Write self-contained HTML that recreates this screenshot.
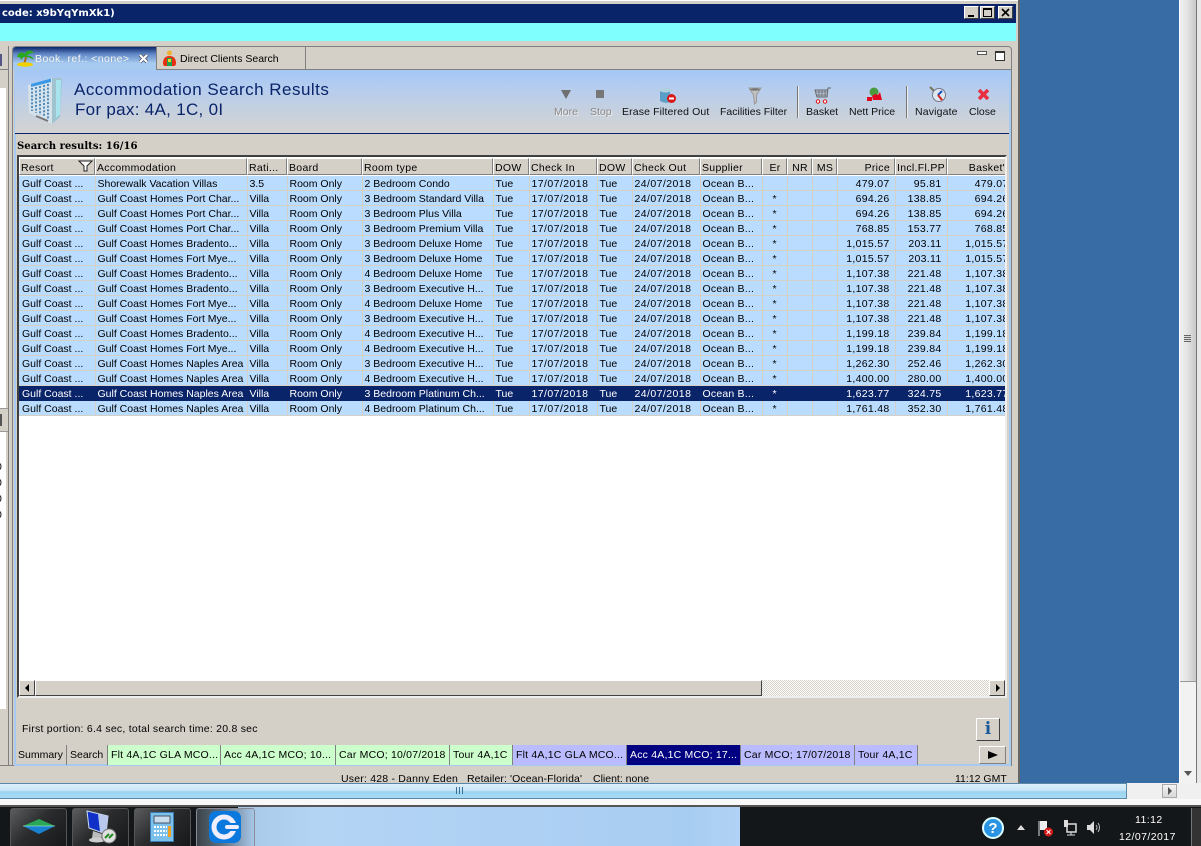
<!DOCTYPE html>
<html><head><meta charset="utf-8"><style>
html,body{margin:0;padding:0}
body{width:1201px;height:846px;position:relative;overflow:hidden;background:#d4d0c8;font:10.5px/15px "Liberation Sans",sans-serif;color:#000;letter-spacing:0}
.a{position:absolute;white-space:nowrap}
table{border-collapse:collapse;table-layout:fixed;position:absolute;left:0;top:0;width:995px}
td{height:12px;padding:2px 2px 0;border-right:1px solid #d4d0c8;border-bottom:1px solid #d4d0c8;background:#b9dcff;overflow:hidden;white-space:nowrap;line-height:12px;box-sizing:content-box}
td:first-child{padding-left:3px}
td:nth-child(7),td:nth-child(9){letter-spacing:.43px}
td:nth-child(10){letter-spacing:.2px}
tr.s td{background:#0a246a;color:#fff;border-color:#0a246a}
td.r{text-align:right;padding-right:5px;letter-spacing:.3px}td.c{text-align:center}
.h{position:absolute;top:158px;height:17px;line-height:19px;box-sizing:border-box;background:#d4d0c8;border-top:1px solid #fff;border-left:1px solid #fff;border-right:1px solid #808080;border-bottom:1px solid #808080;padding-left:1px;overflow:hidden;white-space:nowrap;letter-spacing:.3px}
.t{position:absolute;top:745px;height:20px;line-height:20px;box-sizing:border-box;padding-left:3px;border-right:1px solid #808080;white-space:nowrap;overflow:hidden;letter-spacing:.2px}
.g{background:#ccffcc}.b{background:#bbbbff}
.tb{position:absolute;top:105px;text-align:center;white-space:nowrap;line-height:14px;color:#111}
.bt{position:absolute;top:808px;height:38px;width:57px;box-sizing:border-box;border:1px solid #555;border-bottom:0;border-radius:3px 3px 0 0;background:linear-gradient(135deg,#5a5c5e,#2a2c2e 45%,#16181a)}
</style></head><body>
<div class="a" style="left:0;top:0;width:1018px;height:4px;background:#d4d0c8;border-top:1px solid #fff;box-sizing:border-box"></div>
<div class="a" style="left:0;top:4px;width:1016px;height:19px;background:#0a246a"></div>
<div class="a" style="left:2px;top:4px;color:#fff;font:bold 10px/19px 'DejaVu Sans',sans-serif">code: x9bYqYmXk1)</div>
<div class="a" style="left:964px;top:6px;width:15px;height:13px;background:#d4d0c8;border:1px solid;border-color:#fff #404040 #404040 #fff;box-sizing:border-box"><div class="a" style="left:3px;top:8px;width:6px;height:2px;background:#000"></div></div>
<div class="a" style="left:980px;top:6px;width:15px;height:13px;background:#d4d0c8;border:1px solid;border-color:#fff #404040 #404040 #fff;box-sizing:border-box"><div class="a" style="left:2px;top:1px;width:9px;height:9px;border:1px solid #000;border-top-width:2px;box-sizing:border-box"></div></div>
<div class="a" style="left:998px;top:6px;width:15px;height:13px;background:#d4d0c8;border:1px solid;border-color:#fff #404040 #404040 #fff;box-sizing:border-box"><svg class="a" style="left:2px;top:1px" width="10" height="9"><path d="M1 1L8 8M8 1L1 8" stroke="#000" stroke-width="1.6"/></svg></div>
<div class="a" style="left:0;top:23px;width:1016px;height:18px;background:#80ffff"></div>
<div class="a" style="left:1018px;top:0;width:2px;height:783px;background:#666"></div>
<div class="a" style="left:1020px;top:0;width:159px;height:783px;background:#386ca5"></div>
<div class="a" style="left:1179px;top:0;width:22px;height:783px;background:#fff"></div>
<div class="a" style="left:1180px;top:0;width:16px;height:682px;background:linear-gradient(90deg,#f0f0f0,#e6e6e6 40%,#c8c8c8);border-bottom:1px solid #999;box-sizing:border-box"></div>
<div class="a" style="left:1196px;top:0;width:5px;height:783px;background:#e8e8e8;border-left:1px solid #777;box-sizing:border-box"></div>
<div class="a" style="left:1180px;top:682px;width:16px;height:101px;background:#f2f2f2"></div>
<div class="a" style="left:1184px;top:335px;width:7px;height:7px;background:repeating-linear-gradient(#666 0 1px,#ddd 1px 2px)"></div>
<svg class="a" style="left:1183px;top:771px" width="10" height="6"><path d="M1 0H9L5 5Z" fill="#555"/></svg>

<!-- left panel -->
<div class="a" style="left:0;top:46px;width:9px;height:720px;background:#d4d0c8;border-right:1px solid #808080;box-sizing:border-box"></div>
<div class="a" style="left:0;top:54px;width:2px;height:12px;background:#fff;border:1px solid #558;box-sizing:border-box"></div>
<div class="a" style="left:0;top:69px;width:8px;height:1px;background:#808080"></div>
<div class="a" style="left:0;top:88px;width:6px;height:621px;background:#fff"></div>
<div class="a" style="left:0;top:408px;width:8px;height:24px;background:#d4d0c8;border-top:1px solid #999;border-bottom:1px solid #999;box-sizing:border-box"></div>
<div class="a" style="left:0;top:414px;width:2px;height:12px;border:1px solid #555;box-sizing:border-box"></div>
<div class="a" style="left:-4px;top:459px;line-height:16px">0<br>0<br>0<br>0</div>
<div class="a" style="left:0;top:765px;width:12px;height:1px;background:#808080"></div>

<!-- main panel -->
<div class="a" style="left:12px;top:46px;width:1000px;height:720px;background:#d4d0c8;border:1px solid #808080;border-radius:4px 4px 0 0;box-sizing:border-box"></div>
<div class="a" style="left:13px;top:47px;width:143px;height:23px;background:linear-gradient(#0a246a,#5f86c4 30%,#a6caf0 70%);border-radius:3px 0 0 0"></div>
<div class="a" style="left:156px;top:47px;width:1px;height:23px;background:#808080"></div>
<div class="a" style="left:305px;top:47px;width:1px;height:23px;background:#808080"></div>
<div class="a" style="left:157px;top:69px;width:854px;height:1px;background:#808080"></div>
<svg class="a" style="left:16px;top:49px" width="19" height="18"><path d="M10 7C10 10 9 12 8 15" stroke="#a86a10" stroke-width="2" fill="none"/><path d="M1 8C2 3 7 2 9 5C10 1 15 0 18 4C15 4 12 5 11 7C14 6 17 8 18 11C15 9 12 8 10 8C7 7 7 9 5 11C5 9 4 8 1 8Z" fill="#2aa820"/><ellipse cx="9" cy="15.500" rx="8" ry="2.200" fill="#f0d000"/></svg>
<div class="a" style="left:35px;top:52px;color:#f4f4ee;letter-spacing:.45px">Book. ref.: &lt;none&gt;</div>
<svg class="a" style="left:138px;top:53px" width="11" height="11"><path d="M2 2L9 9M9 2L2 9" stroke="#445" stroke-width="3.500"/><path d="M2 2L9 9M9 2L2 9" stroke="#fff" stroke-width="2.200"/></svg>
<svg class="a" style="left:162px;top:50px" width="15" height="18"><circle cx="7.500" cy="3" r="2.500" fill="#f0b030"/><path d="M1 13C1 8 4 6 7.500 6C11 6 14 8 14 13C14 15 13 16 12 16H3C2 16 1 15 1 13Z" fill="#e83010"/><rect x="5" y="8" width="5" height="8" fill="#20a050"/><rect x="6" y="9" width="3" height="3" fill="#f0d020"/></svg>
<div class="a" style="left:180px;top:52px">Direct Clients Search</div>
<div class="a" style="left:977px;top:51px;width:10px;height:4px;background:#fff;border:1px solid #555;box-sizing:border-box"></div>
<div class="a" style="left:995px;top:51px;width:10px;height:10px;background:#fff;border:1px solid #333;border-top-width:2px;box-sizing:border-box"></div>

<div class="a" style="left:14px;top:70px;width:2px;height:696px;background:#a6caf0"></div>
<div class="a" style="left:1009px;top:70px;width:2px;height:696px;background:#a6caf0"></div>
<div class="a" style="left:14px;top:764px;width:997px;height:2px;background:#a6caf0"></div>

<!-- header band -->
<div class="a" style="left:15px;top:70px;width:994px;height:63px;background:linear-gradient(#a3c7f6,#b6cdee 30%,#d2d3d2 95%)"></div>
<div class="a" style="left:15px;top:133px;width:994px;height:1px;background:#0a246a"></div>
<svg class="a" style="left:26px;top:76px" width="38" height="50"><path d="M2 9L26 2V48L3 37Z" fill="#d6e2ea"/><path d="M26 2H36L34 41L26 48Z" fill="#9fc4cf"/><path d="M30 4H35L34 38L30 42Z" fill="#a8e4ee"/><path d="M5 8L25 2.500V6L5 11Z" fill="#3a98e8"/><path d="M6 12V35M10 11V37M14 10V39M18 9V41M22 8V43" stroke="#4f8cc0" stroke-width="2" stroke-dasharray="2 1.600"/><path d="M10 40L22 45" stroke="#777" stroke-width="2"/></svg>
<div class="a" style="left:74px;top:80px;font-size:17px;line-height:20px;color:#0a246a;letter-spacing:.48px">Accommodation Search Results</div>
<div class="a" style="left:75px;top:100px;font-size:17px;line-height:20px;color:#0a246a;letter-spacing:.3px">For pax: 4A, 1C, 0I</div>

<svg class="a" style="left:560px;top:89px" width="12" height="11"><path d="M1 1H11L6 10Z" fill="#6f6f6f"/></svg>
<div class="a" style="left:596px;top:90px;width:8px;height:8px;background:#777"></div>
<svg class="a" style="left:659px;top:87px" width="18" height="17"><path d="M1 3V14Q6 17 11 15V3Z" fill="#5a9fc8"/><ellipse cx="6.500" cy="3" rx="6" ry="2.500" fill="#b0d0e0"/><circle cx="12.500" cy="11.500" r="4.500" fill="#d81818"/><rect x="10" y="10.500" width="5" height="2" fill="#fff"/></svg>
<svg class="a" style="left:748px;top:87px" width="14" height="18"><path d="M1 1H13L8.500 8V15L6.500 17L5.500 8Z" fill="#c0c0c0" stroke="#9a9a9a"/><ellipse cx="7" cy="2.500" rx="5" ry="1.200" fill="#777"/></svg>
<svg class="a" style="left:814px;top:87px" width="18" height="17"><path d="M17 1H14L13 10H3L1 3H14" fill="none" stroke="#666"/><path d="M2 5H13M3 8H13M5 3V10M8 3V10M11 3V10" stroke="#777"/><circle cx="4" cy="14.500" r="1.700" fill="#fff" stroke="#e01010"/><circle cx="11" cy="14.500" r="1.700" fill="#fff" stroke="#e01010"/></svg>
<svg class="a" style="left:866px;top:87px" width="17" height="16"><circle cx="8" cy="5" r="4.500" fill="#4a9a40"/><path d="M1 10H6V14H1ZM6 9L9 7L12 8L14 5L15 9L16 13H7Z" fill="#e00820"/></svg>
<svg class="a" style="left:929px;top:86px" width="18" height="18"><path d="M1 1L6 6" stroke="#775" stroke-width="2"/><circle cx="10" cy="9" r="6.500" fill="#dde8f0" stroke="#778"/><path d="M13 5L9 9" stroke="#1a50c0" stroke-width="2"/><path d="M9 9L13 14" stroke="#d02020" stroke-width="2"/></svg>
<svg class="a" style="left:977px;top:88px" width="13" height="13"><path d="M2 2L11 11M11 2L2 11" stroke="#e83040" stroke-width="3.500"/></svg>

<div class="tb" style="left:554px;color:#8a8a8a;text-shadow:1px 1px 0 #eee">More</div>
<div class="tb" style="left:590px;color:#8a8a8a;text-shadow:1px 1px 0 #eee">Stop</div>
<div class="tb" style="left:622px;letter-spacing:.12px">Erase Filtered Out</div>
<div class="tb" style="left:720px">Facilities Filter</div>
<div class="a" style="left:797px;top:86px;width:1px;height:32px;background:#777;border-right:1px solid #eee"></div>
<div class="tb" style="left:806px">Basket</div>
<div class="tb" style="left:849px">Nett Price</div>
<div class="a" style="left:906px;top:86px;width:1px;height:32px;background:#777;border-right:1px solid #eee"></div>
<div class="tb" style="left:915px;letter-spacing:.15px">Navigate</div>
<div class="tb" style="left:969px">Close</div>

<div class="a" style="left:17px;top:139px;font:bold 10.1px/15px 'DejaVu Serif','Liberation Serif',serif">Search results: 16/16</div>

<!-- grid frame -->
<div class="a" style="left:17px;top:155px;width:990px;height:543px;background:#fff;border:2px solid;border-color:#404040 #eee #eee #404040;box-sizing:border-box"></div>
<div class="h" style="left:19px;width:76px">Resort</div>
<div class="h" style="left:95px;width:152px">Accommodation</div>
<div class="h" style="left:247px;width:40px">Rati...</div>
<div class="h" style="left:287px;width:75px">Board</div>
<div class="h" style="left:362px;width:131px">Room type</div>
<div class="h" style="left:493px;width:36px">DOW</div>
<div class="h" style="left:529px;width:68px">Check In</div>
<div class="h" style="left:597px;width:35px">DOW</div>
<div class="h" style="left:632px;width:68px">Check Out</div>
<div class="h" style="left:700px;width:62px">Supplier</div>
<div class="h" style="left:762px;width:25px;text-align:center">Er</div>
<div class="h" style="left:787px;width:25px;text-align:center">NR</div>
<div class="h" style="left:812px;width:25px;text-align:center">MS</div>
<div class="h" style="left:837px;width:58px;text-align:right;padding-right:4px">Price</div>
<div class="h" style="left:895px;width:52px;text-align:right;padding-right:3px">Incl.Fl.PP</div>
<div class="h" style="left:947px;width:58px;text-align:right;padding-right:0;border-right:0">Basket'</div>
<svg class="a" style="left:78px;top:160px" width="15" height="12"><path d="M1 1H14L9 6V11L6 11V6Z" fill="#fff" stroke="#222"/></svg>

<div class="a" style="left:19px;top:176px;width:986px;height:240px;overflow:hidden">
<table><colgroup><col style="width:76px"><col style="width:152px"><col style="width:40px"><col style="width:75px"><col style="width:131px"><col style="width:36px"><col style="width:68px"><col style="width:35px"><col style="width:68px"><col style="width:62px"><col style="width:25px"><col style="width:25px"><col style="width:25px"><col style="width:58px"><col style="width:52px"><col style="width:67px"></colgroup>
<tr><td>Gulf Coast ...</td><td>Shorewalk Vacation Villas</td><td>3.5</td><td>Room Only</td><td>2 Bedroom Condo</td><td>Tue</td><td>17/07/2018</td><td>Tue</td><td>24/07/2018</td><td>Ocean B...</td><td class="c"></td><td></td><td></td><td class="r">479.07</td><td class="r">95.81</td><td class="r">479.07</td></tr>
<tr><td>Gulf Coast ...</td><td>Gulf Coast Homes Port Char...</td><td>Villa</td><td>Room Only</td><td>3 Bedroom Standard Villa</td><td>Tue</td><td>17/07/2018</td><td>Tue</td><td>24/07/2018</td><td>Ocean B...</td><td class="c">*</td><td></td><td></td><td class="r">694.26</td><td class="r">138.85</td><td class="r">694.26</td></tr>
<tr><td>Gulf Coast ...</td><td>Gulf Coast Homes Port Char...</td><td>Villa</td><td>Room Only</td><td>3 Bedroom Plus Villa</td><td>Tue</td><td>17/07/2018</td><td>Tue</td><td>24/07/2018</td><td>Ocean B...</td><td class="c">*</td><td></td><td></td><td class="r">694.26</td><td class="r">138.85</td><td class="r">694.26</td></tr>
<tr><td>Gulf Coast ...</td><td>Gulf Coast Homes Port Char...</td><td>Villa</td><td>Room Only</td><td>3 Bedroom Premium Villa</td><td>Tue</td><td>17/07/2018</td><td>Tue</td><td>24/07/2018</td><td>Ocean B...</td><td class="c">*</td><td></td><td></td><td class="r">768.85</td><td class="r">153.77</td><td class="r">768.85</td></tr>
<tr><td>Gulf Coast ...</td><td>Gulf Coast Homes Bradento...</td><td>Villa</td><td>Room Only</td><td>3 Bedroom Deluxe Home</td><td>Tue</td><td>17/07/2018</td><td>Tue</td><td>24/07/2018</td><td>Ocean B...</td><td class="c">*</td><td></td><td></td><td class="r">1,015.57</td><td class="r">203.11</td><td class="r">1,015.57</td></tr>
<tr><td>Gulf Coast ...</td><td>Gulf Coast Homes Fort Mye...</td><td>Villa</td><td>Room Only</td><td>3 Bedroom Deluxe Home</td><td>Tue</td><td>17/07/2018</td><td>Tue</td><td>24/07/2018</td><td>Ocean B...</td><td class="c">*</td><td></td><td></td><td class="r">1,015.57</td><td class="r">203.11</td><td class="r">1,015.57</td></tr>
<tr><td>Gulf Coast ...</td><td>Gulf Coast Homes Bradento...</td><td>Villa</td><td>Room Only</td><td>4 Bedroom Deluxe Home</td><td>Tue</td><td>17/07/2018</td><td>Tue</td><td>24/07/2018</td><td>Ocean B...</td><td class="c">*</td><td></td><td></td><td class="r">1,107.38</td><td class="r">221.48</td><td class="r">1,107.38</td></tr>
<tr><td>Gulf Coast ...</td><td>Gulf Coast Homes Bradento...</td><td>Villa</td><td>Room Only</td><td>3 Bedroom Executive H...</td><td>Tue</td><td>17/07/2018</td><td>Tue</td><td>24/07/2018</td><td>Ocean B...</td><td class="c">*</td><td></td><td></td><td class="r">1,107.38</td><td class="r">221.48</td><td class="r">1,107.38</td></tr>
<tr><td>Gulf Coast ...</td><td>Gulf Coast Homes Fort Mye...</td><td>Villa</td><td>Room Only</td><td>4 Bedroom Deluxe Home</td><td>Tue</td><td>17/07/2018</td><td>Tue</td><td>24/07/2018</td><td>Ocean B...</td><td class="c">*</td><td></td><td></td><td class="r">1,107.38</td><td class="r">221.48</td><td class="r">1,107.38</td></tr>
<tr><td>Gulf Coast ...</td><td>Gulf Coast Homes Fort Mye...</td><td>Villa</td><td>Room Only</td><td>3 Bedroom Executive H...</td><td>Tue</td><td>17/07/2018</td><td>Tue</td><td>24/07/2018</td><td>Ocean B...</td><td class="c">*</td><td></td><td></td><td class="r">1,107.38</td><td class="r">221.48</td><td class="r">1,107.38</td></tr>
<tr><td>Gulf Coast ...</td><td>Gulf Coast Homes Bradento...</td><td>Villa</td><td>Room Only</td><td>4 Bedroom Executive H...</td><td>Tue</td><td>17/07/2018</td><td>Tue</td><td>24/07/2018</td><td>Ocean B...</td><td class="c">*</td><td></td><td></td><td class="r">1,199.18</td><td class="r">239.84</td><td class="r">1,199.18</td></tr>
<tr><td>Gulf Coast ...</td><td>Gulf Coast Homes Fort Mye...</td><td>Villa</td><td>Room Only</td><td>4 Bedroom Executive H...</td><td>Tue</td><td>17/07/2018</td><td>Tue</td><td>24/07/2018</td><td>Ocean B...</td><td class="c">*</td><td></td><td></td><td class="r">1,199.18</td><td class="r">239.84</td><td class="r">1,199.18</td></tr>
<tr><td>Gulf Coast ...</td><td>Gulf Coast Homes Naples Area</td><td>Villa</td><td>Room Only</td><td>3 Bedroom Executive H...</td><td>Tue</td><td>17/07/2018</td><td>Tue</td><td>24/07/2018</td><td>Ocean B...</td><td class="c">*</td><td></td><td></td><td class="r">1,262.30</td><td class="r">252.46</td><td class="r">1,262.30</td></tr>
<tr><td>Gulf Coast ...</td><td>Gulf Coast Homes Naples Area</td><td>Villa</td><td>Room Only</td><td>4 Bedroom Executive H...</td><td>Tue</td><td>17/07/2018</td><td>Tue</td><td>24/07/2018</td><td>Ocean B...</td><td class="c">*</td><td></td><td></td><td class="r">1,400.00</td><td class="r">280.00</td><td class="r">1,400.00</td></tr>
<tr class="s"><td>Gulf Coast ...</td><td>Gulf Coast Homes Naples Area</td><td>Villa</td><td>Room Only</td><td>3 Bedroom Platinum Ch...</td><td>Tue</td><td>17/07/2018</td><td>Tue</td><td>24/07/2018</td><td>Ocean B...</td><td class="c">*</td><td></td><td></td><td class="r">1,623.77</td><td class="r">324.75</td><td class="r">1,623.77</td></tr>
<tr><td>Gulf Coast ...</td><td>Gulf Coast Homes Naples Area</td><td>Villa</td><td>Room Only</td><td>4 Bedroom Platinum Ch...</td><td>Tue</td><td>17/07/2018</td><td>Tue</td><td>24/07/2018</td><td>Ocean B...</td><td class="c">*</td><td></td><td></td><td class="r">1,761.48</td><td class="r">352.30</td><td class="r">1,761.48</td></tr>
</table></div>

<!-- horizontal scrollbar -->
<div class="a" style="left:19px;top:680px;width:986px;height:16px;background:repeating-conic-gradient(#d4d0c8 0 25%,#fff 0 50%) 0 0/2px 2px"></div>
<div class="a" style="left:19px;top:680px;width:16px;height:16px;background:#d4d0c8;border:1px solid;border-color:#fff #404040 #404040 #fff;box-sizing:border-box"><svg class="a" style="left:4px;top:3px" width="6" height="8"><path d="M5 0V8L1 4Z" fill="#000"/></svg></div>
<div class="a" style="left:35px;top:680px;width:727px;height:16px;background:#d4d0c8;border:1px solid;border-color:#fff #404040 #404040 #fff;box-sizing:border-box"></div>
<div class="a" style="left:989px;top:680px;width:16px;height:16px;background:#d4d0c8;border:1px solid;border-color:#fff #404040 #404040 #fff;box-sizing:border-box"><svg class="a" style="left:5px;top:3px" width="6" height="8"><path d="M1 0V8L5 4Z" fill="#000"/></svg></div>

<div class="a" style="left:22px;top:722px;letter-spacing:.24px">First portion: 6.4 sec, total search time: 20.8 sec</div>
<div class="a" style="left:976px;top:718px;width:24px;height:23px;background:#d4d0c8;border:1px solid;border-color:#fff #404040 #404040 #fff;box-sizing:border-box;text-align:center;font:bold 17px/20px 'DejaVu Serif',serif;color:#1a5a9a">i</div>

<!-- bottom tabs -->
<div class="t" style="left:15px;width:52px;letter-spacing:0">Summary</div>
<div class="t" style="left:67px;width:41px;letter-spacing:0">Search</div>
<div class="t g" style="left:108px;width:113px">Flt 4A,1C GLA MCO...</div>
<div class="t g" style="left:221px;width:115px">Acc 4A,1C MCO; 10...</div>
<div class="t g" style="left:336px;width:114px">Car MCO; 10/07/2018</div>
<div class="t g" style="left:450px;width:63px">Tour 4A,1C</div>
<div class="t b" style="left:513px;width:114px">Flt 4A,1C GLA MCO...</div>
<div class="t" style="left:627px;width:114px;background:#000080;color:#fff">Acc 4A,1C MCO; 17...</div>
<div class="t b" style="left:741px;width:114px">Car MCO; 17/07/2018</div>
<div class="t b" style="left:855px;width:63px">Tour 4A,1C</div>
<div class="a" style="left:979px;top:746px;width:27px;height:18px;background:#d4d0c8;border:1px solid;border-color:#fff #808080 #808080 #fff;box-sizing:border-box"><svg class="a" style="left:7px;top:4px" width="12" height="8"><path d="M1 0V8L11 4Z" fill="#000"/></svg></div>

<!-- status -->
<div class="a" style="left:341px;top:771px;height:12px;overflow:hidden;line-height:16px;letter-spacing:.2px">User: 428 - Danny Eden</div>
<div class="a" style="left:467px;top:771px;height:12px;overflow:hidden;line-height:16px;letter-spacing:.1px">Retailer: 'Ocean-Florida'</div>
<div class="a" style="left:593px;top:771px;height:12px;overflow:hidden;line-height:16px">Client: none</div>
<div class="a" style="left:955px;top:771px;height:12px;overflow:hidden;line-height:16px">11:12 GMT</div>

<!-- lower scrollbar -->
<div class="a" style="left:0;top:783px;width:1201px;height:16px;background:#f0f0f0"></div>
<div class="a" style="left:0;top:783px;width:1127px;height:16px;box-sizing:border-box;border:1px solid #5a88a8;border-left:0;background:linear-gradient(#dff1fb,#c8e6f8 45%,#9ed4f0 55%,#a8daf4)"></div>
<div class="a" style="left:456px;top:787px;width:9px;height:7px;background:repeating-linear-gradient(90deg,#3a6c98 0 1px,transparent 1px 3px)"></div>
<div class="a" style="left:1162px;top:784px;width:15px;height:14px;background:linear-gradient(#f4f4f4,#d8d8d8);border:1px solid #aaa;box-sizing:border-box"><svg class="a" style="left:4px;top:2px" width="6" height="9"><path d="M1 0V8L5 4Z" fill="#555"/></svg></div>
<div class="a" style="left:0;top:799px;width:1201px;height:8px;background:#f8f8f8;border-bottom:2px solid #555;box-sizing:border-box"></div>

<!-- taskbar -->
<div class="a" style="left:0;top:807px;width:1201px;height:39px;background:#14171a"></div>
<div class="a" style="left:238px;top:807px;width:502px;height:39px;background:linear-gradient(90deg,#a8c8e8,#b4d4f4 15%,#a8cdf2 90%,#b0d2f4)"></div>
<div class="bt" style="left:10px"></div>
<div class="bt" style="left:72px"></div>
<div class="bt" style="left:134px"></div>
<div class="bt" style="left:196px;width:59px;background:linear-gradient(90deg,#3c4448,#5a6c7c 40%,#a8c8e8);border-color:#889"></div>
<svg class="a" style="left:22px;top:818px" width="34" height="17"><path d="M1 8L17 1L33 8Z" fill="#2aa858"/><path d="M1 8H33L17 16Z" fill="#1a80d0"/><path d="M1 8H33" stroke="#cfe" stroke-width=".6"/></svg>
<svg class="a" style="left:84px;top:810px" width="36" height="34"><path d="M3 1L24 6L22 24L5 18Z" fill="#1030c8" stroke="#cde"/><path d="M14 4L24 6L22 24L16 22Z" fill="#b8c8ec"/><path d="M9 21L18 24L17 30L8 28Z" fill="#bbb"/><ellipse cx="13" cy="30" rx="8" ry="2.500" fill="#ccc"/><circle cx="25" cy="26" r="7" fill="#e0e0e0" stroke="#777"/><path d="M21 28L25 24M25 28L29 24" stroke="#282" stroke-width="2"/></svg>
<svg class="a" style="left:150px;top:812px" width="25" height="30"><rect x=".5" y=".5" width="23" height="29" fill="#7cc0ec" stroke="#3a7ab0"/><rect x="4" y="4" width="16" height="7" fill="#c8dcec" stroke="#456"/><path d="M4 15H17M4 19H17M4 23H17" stroke="#fff" stroke-width="2" stroke-dasharray="2 1"/><rect x="18" y="14" width="3" height="11" fill="#f0a020"/></svg>
<svg class="a" style="left:209px;top:811px" width="32" height="32"><rect width="32" height="32" rx="7" fill="#0a78dc"/><circle cx="15" cy="16" r="10" fill="none" stroke="#eef" stroke-width="5"/><rect x="15" y="13" width="16" height="6" rx="3" fill="#eef" stroke="#0a78dc" stroke-width="2"/></svg>
<svg class="a" style="left:982px;top:817px" width="22" height="22"><circle cx="11" cy="11" r="10" fill="#2a94e4" stroke="#dff" stroke-width="2"/><text x="11" y="16" font-size="15" font-weight="bold" text-anchor="middle" fill="#fff" font-family="Liberation Sans">?</text></svg>
<svg class="a" style="left:1017px;top:825px" width="9" height="6"><path d="M0 5H8L4 0Z" fill="#ddd"/></svg>
<svg class="a" style="left:1038px;top:820px" width="16" height="17"><path d="M1 1V16" stroke="#ddd"/><path d="M2 1H9V10H2Z" fill="#eee"/><circle cx="10.500" cy="12" r="4.500" fill="#d81818"/><path d="M8.500 10L12.500 14M12.500 10L8.500 14" stroke="#fff"/></svg>
<svg class="a" style="left:1062px;top:820px" width="16" height="16"><path d="M5 4H14V12H5Z" fill="none" stroke="#ddd" stroke-width="1.500"/><rect x="2" y="0" width="4" height="7" fill="#ddd"/><path d="M9 12V15M5 15H13" stroke="#ddd"/></svg>
<svg class="a" style="left:1086px;top:820px" width="15" height="15"><path d="M1 5H4L8 1V14L4 10H1Z" fill="#ddd"/><path d="M10 5Q12 7.500 10 10M12 3Q15 7.500 12 12" stroke="#bbb" fill="none"/></svg>
<div class="a" style="left:1135px;top:813px;color:#fff;line-height:15px;letter-spacing:.43px">11:12</div>
<div class="a" style="left:1119px;top:830px;color:#fff;line-height:15px;letter-spacing:.43px">12/07/2017</div>
<div class="a" style="left:1191px;top:808px;width:10px;height:38px;background:#333;border-left:1px solid #777;box-sizing:border-box"></div>
</body></html>
